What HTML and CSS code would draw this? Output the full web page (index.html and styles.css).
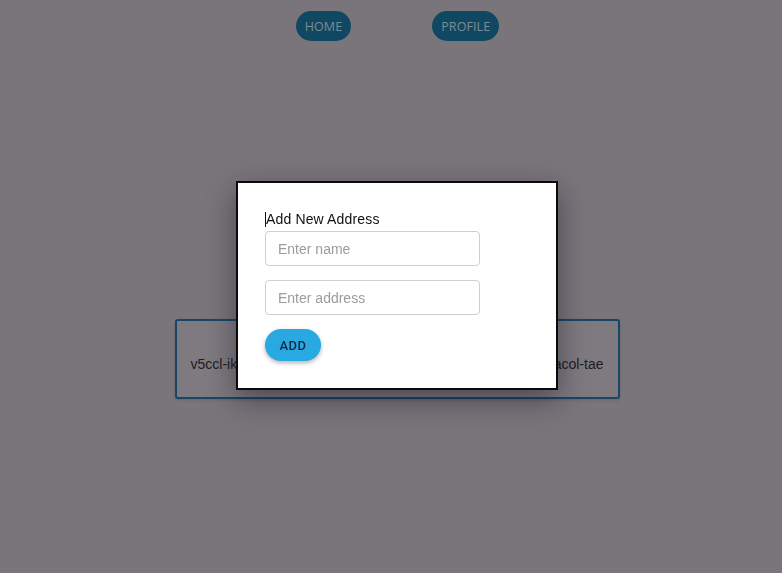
FILE: index.html
```html
<!DOCTYPE html>
<html lang="en">
<head>
<meta charset="utf-8">
<title>Addresses</title>
<link rel="stylesheet" href="styles.css">
</head>
<body>
<nav class="nav">
  <a class="nav-btn" href="#">HOME</a>
  <a class="nav-btn" href="#">PROFILE</a>
</nav>
<main class="main">
  <div class="card">
    <span class="card-text">v5ccl-ikmzbq</span>
    <span class="card-text">h2ll0-bacol-tae</span>
  </div>
</main>
<div class="overlay">
  <div class="modal">
    <div class="modal-title"><span class="caret"></span>Add New Address</div>
    <input class="field" type="text" placeholder="Enter name">
    <input class="field" type="text" placeholder="Enter address">
    <button class="add-btn" type="button">ADD</button>
  </div>
</div>
</body>
</html>
```
FILE: styles.css
```css
* { box-sizing: border-box; }
html, body { margin: 0; height: 100%; }
body {
  background: #7a757b;
  font-family: "Liberation Sans", Arial, sans-serif;
  color: #1c1a1d;
}
.nav {
  display: flex;
  justify-content: center;
  gap: 81px;
  padding: 11px 0 0 13px;
}
.nav-btn {
  display: flex;
  align-items: center;
  justify-content: center;
  height: 30px;
  padding: 0 9px;
  border-radius: 15px;
  background: #104862;
  color: #7d8b97;
  font-family: "Open Sans", "DejaVu Sans", sans-serif;
  font-size: 12.5px;
  letter-spacing: 0.1px;
  text-decoration: none;
}
.main {
  display: flex;
  justify-content: center;
  padding: 278px 0 0 12px;
}
.card {
  width: 445px;
  height: 80px;
  display: flex;
  justify-content: space-between;
  align-items: center;
  padding: 10px 14px 0 14px;
  border: 2px solid #164866;
  border-radius: 3px;
  background: #7e7a80;
  box-shadow: 0 1px 3px rgba(0,0,0,0.15);
}
.card-text {
  font-size: 14px;
  color: #1f1d21;
}
.overlay {
  position: fixed;
  inset: 0;
  display: flex;
  align-items: center;
  justify-content: center;
  padding: 0 0 2px 12px;
}
.modal {
  width: 322px;
  height: 209px;
  background: #ffffff;
  border: 2px solid #0a0a0a;
  padding: 28px 27px 26px 27px;
  display: flex;
  flex-direction: column;
  align-items: flex-start;
  box-shadow: 0 10px 28px rgba(20,10,25,0.45);
}
.modal-title {
  display: flex;
  align-items: center;
  font-size: 14px;
  line-height: 16px;
  letter-spacing: 0.15px;
  color: #111;
  margin-bottom: 4px;
}
.caret {
  width: 1px;
  height: 15px;
  background: #111;
}
.field {
  width: 215px;
  height: 35px;
  border: 1px solid #cfcfcf;
  border-radius: 4px;
  padding: 0 12px;
  font-family: "Liberation Sans", Arial, sans-serif;
  font-size: 14px;
  color: #222;
  margin-bottom: 14px;
  outline: none;
}
.field::placeholder { color: #9c9c9c; }
.add-btn {
  width: 56px;
  height: 32px;
  border: none;
  border-radius: 16px;
  background: #29a9e1;
  color: #0f2a3c;
  font-family: Roboto, "Liberation Sans", sans-serif;
  font-size: 13px;
  font-weight: 500;
  letter-spacing: 0.4px;
  box-shadow: 0 2px 4px rgba(0,0,0,0.3);
  padding: 0;
  cursor: pointer;
}
```
